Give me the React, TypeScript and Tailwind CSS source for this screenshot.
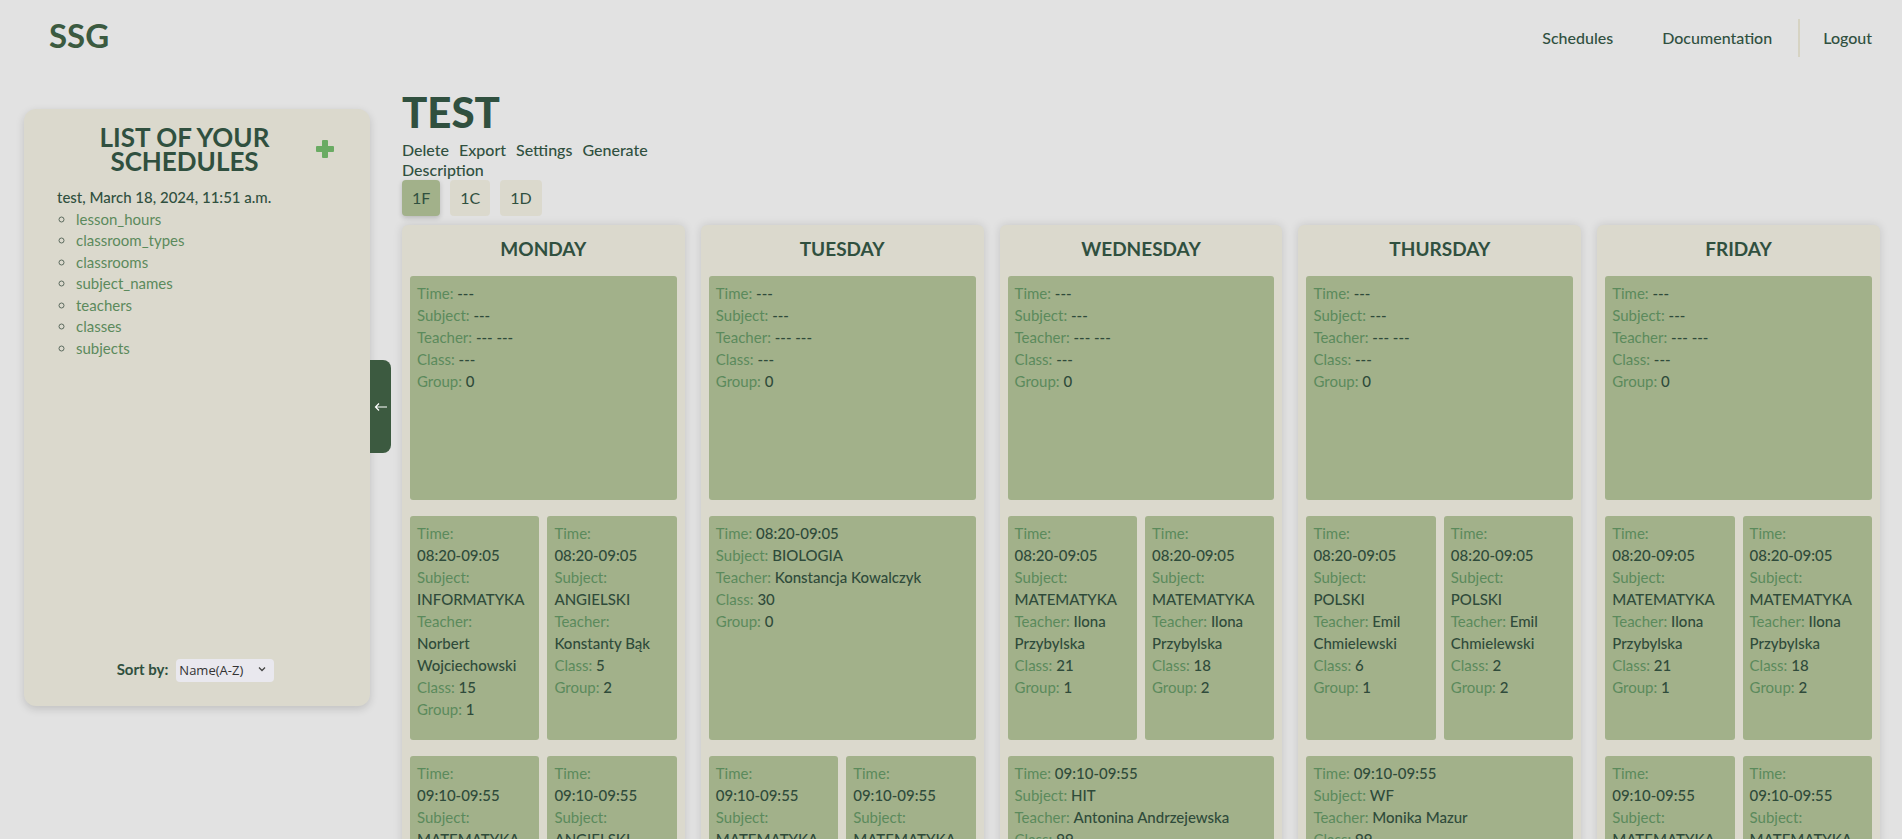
import { useState } from "react";

type Lesson = {
  time: string;
  subject: string;
  teacher: string;
  cls: string;
  group: string;
};

const empty: Lesson = { time: "---", subject: "---", teacher: "--- ---", cls: "---", group: "0" };

const L = (time: string, subject: string, teacher: string, cls: string, group: string): Lesson => ({
  time,
  subject,
  teacher,
  cls,
  group,
});

const days: { name: string; rows: Lesson[][] }[] = [
  {
    name: "MONDAY",
    rows: [
      [empty],
      [
        L("08:20-09:05", "INFORMATYKA", "Norbert Wojciechowski", "15", "1"),
        L("08:20-09:05", "ANGIELSKI", "Konstanty Bąk", "5", "2"),
      ],
      [
        L("09:10-09:55", "MATEMATYKA", "Ilona Przybylska", "21", "1"),
        L("09:10-09:55", "ANGIELSKI", "Konstanty Bąk", "5", "2"),
      ],
    ],
  },
  {
    name: "TUESDAY",
    rows: [
      [empty],
      [L("08:20-09:05", "BIOLOGIA", "Konstancja Kowalczyk", "30", "0")],
      [
        L("09:10-09:55", "MATEMATYKA", "Ilona Przybylska", "21", "1"),
        L("09:10-09:55", "MATEMATYKA", "Ilona Przybylska", "18", "2"),
      ],
    ],
  },
  {
    name: "WEDNESDAY",
    rows: [
      [empty],
      [
        L("08:20-09:05", "MATEMATYKA", "Ilona Przybylska", "21", "1"),
        L("08:20-09:05", "MATEMATYKA", "Ilona Przybylska", "18", "2"),
      ],
      [L("09:10-09:55", "HIT", "Antonina Andrzejewska", "99", "0")],
    ],
  },
  {
    name: "THURSDAY",
    rows: [
      [empty],
      [
        L("08:20-09:05", "POLSKI", "Emil Chmielewski", "6", "1"),
        L("08:20-09:05", "POLSKI", "Emil Chmielewski", "2", "2"),
      ],
      [L("09:10-09:55", "WF", "Monika Mazur", "99", "0")],
    ],
  },
  {
    name: "FRIDAY",
    rows: [
      [empty],
      [
        L("08:20-09:05", "MATEMATYKA", "Ilona Przybylska", "21", "1"),
        L("08:20-09:05", "MATEMATYKA", "Ilona Przybylska", "18", "2"),
      ],
      [
        L("09:10-09:55", "MATEMATYKA", "Ilona Przybylska", "21", "1"),
        L("09:10-09:55", "MATEMATYKA", "Ilona Przybylska", "18", "2"),
      ],
    ],
  },
];

const tables = ["lesson_hours", "classroom_types", "classrooms", "subject_names", "teachers", "classes", "subjects"];

function LessonCard({ lesson }: { lesson: Lesson }) {
  const fields: [string, string][] = [
    ["Time", lesson.time],
    ["Subject", lesson.subject],
    ["Teacher", lesson.teacher],
    ["Class", lesson.cls],
    ["Group", lesson.group],
  ];
  return (
    <div className="h-[224px] min-w-0 flex-1 rounded-[3px] bg-[#a2b18a] pl-[7px] pr-[20px] pt-[6px] text-[15px] leading-[22px]">
      {fields.map(([label, value]) => (
        <p key={label}>
          <span className="text-[#5b8a5c]">{label}:</span>{" "}
          <span className={`font-medium text-[#2f4b3a] ${label === "Time" ? "whitespace-nowrap" : ""}`}>
            {value}
          </span>
        </p>
      ))}
    </div>
  );
}

function PlusIcon() {
  return (
    <svg width="18" height="18" viewBox="0 0 18 18" className="shrink-0">
      <rect x="6" y="0" width="6" height="18" rx="1" fill="#6aab63" />
      <rect x="0" y="6" width="18" height="6" rx="1" fill="#6aab63" />
    </svg>
  );
}

export default function App() {
  const [active, setActive] = useState("1F");

  return (
    <div className="h-screen overflow-hidden bg-[#e2e2e2] font-[Lato,sans-serif] text-[#30503f]">
      <header className="flex h-[70px] items-center justify-between pl-[49px] pr-[30px]">
        <span className="text-[33px] font-bold leading-none text-[#3b5a40]">SSG</span>
        <nav className="mt-[6px] flex items-center text-[16px] font-medium text-[#30503f]">
          <a className="mr-[49px]">Schedules</a>
          <a className="mr-[26px]">Documentation</a>
          <span className="mr-[23px] h-[38px] w-[2px] bg-[#d6d3c3]" />
          <a>Logout</a>
        </nav>
      </header>

      <div className="flex pl-6 pr-[22px]">
        <aside className="mt-[39px] flex h-[597px] w-[346px] shrink-0 flex-col rounded-xl bg-[#dbd9cd] pb-6 pl-[33px] pr-9 pt-4 shadow-[0_3px_8px_rgba(0,0,0,0.15)]">
          <div className="flex items-center">
            <h2 className="mr-1 flex-1 text-center text-[26px] font-bold leading-6 text-[#30503f]">
              LIST OF YOUR
              <br />
              SCHEDULES
            </h2>
            <PlusIcon />
          </div>
          <p className="mt-[14px] text-[15px] font-medium leading-[21.5px] text-[#30503f]">
            test, March 18, 2024, 11:51 a.m.
          </p>
          <ul className="ml-[19px] list-[circle] text-[15px] leading-[21.5px] text-[#5b8a5c] marker:text-[#5b6b5e]">
            {tables.map((t) => (
              <li key={t}>{t}</li>
            ))}
          </ul>
          <div className="mt-auto flex items-center justify-center gap-2">
            <span className="text-[15px] font-bold text-[#30503f]">Sort by:</span>
            <div className="relative">
              <select className="h-[23px] w-[98px] appearance-none rounded-[4px] bg-[#e9e8ee] pl-[3px] font-['Open_Sans',sans-serif] text-[13px] text-[#333]">
                <option>Name(A-Z)</option>
                <option>Name(Z-A)</option>
                <option>Date</option>
              </select>
              <svg
                width="10"
                height="10"
                viewBox="0 0 10 10"
                className="pointer-events-none absolute right-[7px] top-[7px]"
              >
                <path d="M2 3.5 L5 6.5 L8 3.5" stroke="#444" strokeWidth="1.3" fill="none" />
              </svg>
            </div>
          </div>
        </aside>

        <button className="mt-[290px] flex h-[93px] w-[21px] shrink-0 items-center justify-center rounded-r-lg bg-[#3c5a40]">
          <svg width="14" height="10" viewBox="0 0 14 10">
            <path d="M13 5 H1.5 M5 1.5 L1.5 5 L5 8.5" stroke="#fff" strokeWidth="1.2" fill="none" />
          </svg>
        </button>

        <main className="ml-[11px] min-w-0 flex-1 pt-[21px]">
          <h1 className="text-[42px] font-black leading-[42px] text-[#30503f]">TEST</h1>
          <div className="mt-[7px] flex w-[270px] flex-wrap gap-x-[10px] text-[16px] font-medium leading-5 text-[#30503f]">
            <a>Delete</a>
            <a>Export</a>
            <a>Settings</a>
            <a>Generate</a>
            <a>Description</a>
          </div>
          <div className="flex gap-[10px]">
            {["1F", "1C", "1D"].map((c) => (
              <button
                key={c}
                onClick={() => setActive(c)}
                className={`h-9 rounded-[4px] px-[10px] text-[16px] text-[#30503f] ${
                  active === c ? "bg-[#a2b18a] shadow-[0_2px_5px_rgba(0,0,0,0.18)]" : "bg-[#dbd9cd]"
                }`}
              >
                {c}
              </button>
            ))}
          </div>

          <div className="mt-[9px] grid grid-cols-5 gap-4">
            {days.map((day) => (
              <section
                key={day.name}
                className="rounded-md bg-[#dbd9cd] px-2 pb-4 shadow-[0_0_10px_rgba(0,0,0,0.13)]"
              >
                <h3 className="pb-4 pt-3 text-center text-[19px] font-bold leading-[23px] text-[#30503f]">
                  {day.name}
                </h3>
                <div className="flex flex-col gap-4">
                  {day.rows.map((row, i) => (
                    <div key={i} className="flex gap-2">
                      {row.map((lesson, j) => (
                        <LessonCard key={j} lesson={lesson} />
                      ))}
                    </div>
                  ))}
                </div>
              </section>
            ))}
          </div>
        </main>
      </div>
    </div>
  );
}
